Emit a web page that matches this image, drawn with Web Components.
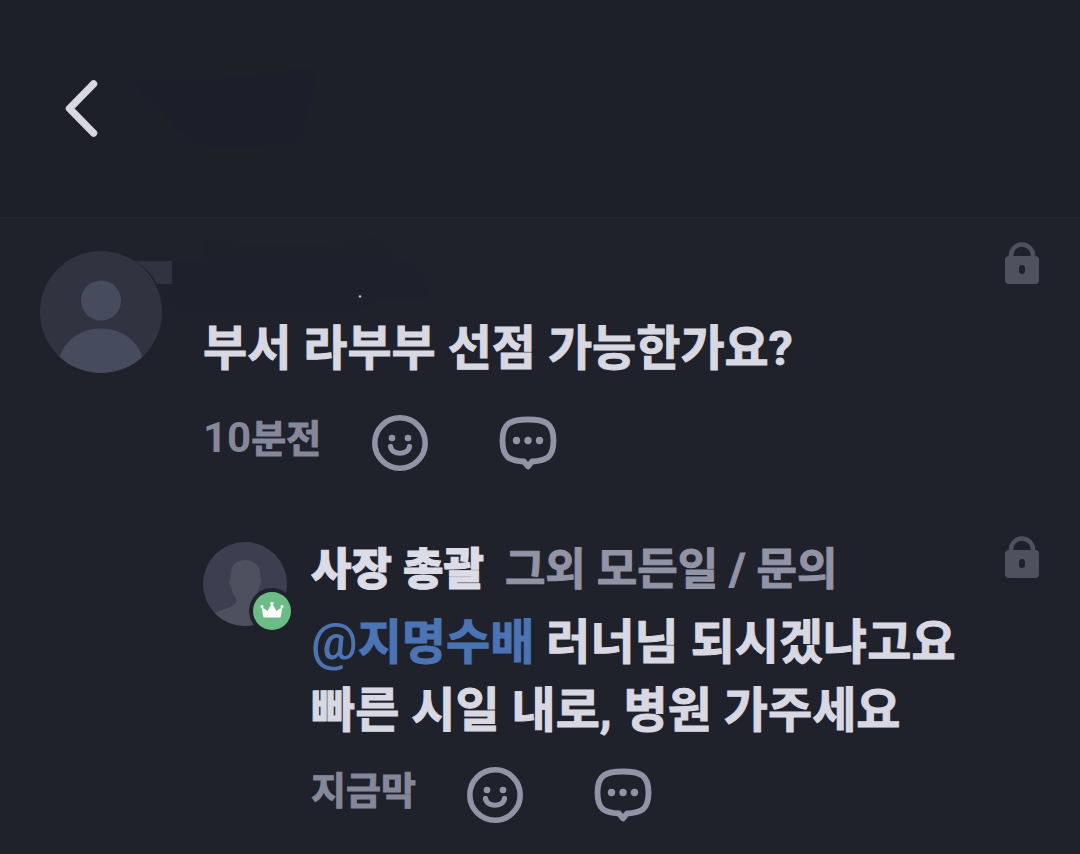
<!DOCTYPE html>
<html lang="ko">
<head>
<meta charset="utf-8">
<meta name="viewport" content="width=device-width, initial-scale=1">
<title>댓글</title>
<style>
  html { background: #20222b; }
  body {
    margin: 0;
    color: #d8d8e3;
    font-family: Roboto, "Noto Sans CJK KR", sans-serif;
    font-weight: 700;
  }
</style>
</head>
<body>
<comment-page></comment-page>

<template id="page-template">
  <style>
    :host { display: block; min-height: 100vh; background: #20222b; }
    main { display: block; }
    .name { color: #dcdce6; font-weight: 900; -webkit-text-stroke: 1px; }
  </style>
  <top-bar></top-bar>
  <main>
    <comment-item time="10분전">
      <user-avatar slot="avatar"></user-avatar>
      <name-cover slot="author"></name-cover>
      부서 라부부 선점 가능한가요?
    </comment-item>
    <comment-item reply time="지금막">
      <user-avatar slot="avatar" kind="owner"></user-avatar>
      <span slot="author" class="name">사장 총괄</span>
      <span slot="role">그외 모든일 / 문의</span>
      <user-mention name="지명수배"></user-mention> 러너님 되시겠냐고요<br>빠른 시일 내로, 병원 가주세요
    </comment-item>
  </main>
</template>

<template id="bar-template">
  <style>
    :host { display: block; background: #1e2028; border-bottom: 1px solid #24262f; }
    header { display: flex; align-items: center; gap: 32px; height: 217px; padding: 0 64px; box-sizing: border-box; }
    button { display: block; padding: 0; border: 0; background: none; color: #d8d8e3; cursor: pointer; }
    svg { display: block; }
  </style>
  <header>
    <button type="button" aria-label="뒤로">
      <svg width="36" height="60" viewBox="0 0 36 60" fill="none" stroke="currentColor" stroke-width="7.500" stroke-linecap="round" stroke-linejoin="round"><path d="M29.500 5 5.500 29.500 29.500 54"/></svg>
    </button>
    <svg width="184" height="84" viewBox="0 0 184 84" fill="#1c1f29" aria-hidden="true"><path d="M2 14 28 12 102 11 150 4 180 1 184 12 178 34 172 62 160 75 124 80 92 82 66 76 46 64 30 44 14 30Z"/></svg>
  </header>
</template>

<template id="cover-template">
  <style>
    :host { display: block; width: 292px; height: 72px; }
    svg { display: block; overflow: visible; }
  </style>
  <svg width="292" height="72" viewBox="0 0 292 72" aria-hidden="true">
    <path fill="#1e202a" d="M64 0 82-3 100 1 140 3 190 1 230-4 250-2 255 17H64Z"/>
    <path fill="#1e212c" d="M33 17H255L287 26 292 36 288 58 240 59 218 70 40 70 26 64Z"/>
    <path fill="#323341" d="M0 19H33V42H18Q12 29-4 19Z"/>
    <circle cx="221" cy="54.500" r="1.300" fill="#b5b6be"/>
  </svg>
</template>

<template id="avatar-template">
  <style>
    :host { display: block; position: relative; }
    svg { display: block; width: 100%; }
    .badge { position: absolute; right: -8px; bottom: -8px; width: 46px; }
    .owner, .badge { display: none; }
    :host([kind="owner"]) .person { display: none; }
    :host([kind="owner"]) .owner, :host([kind="owner"]) .badge { display: block; }
  </style>
  <svg class="person" viewBox="0 0 122 122" aria-hidden="true">
    <clipPath id="round"><circle cx="61" cy="61" r="61"/></clipPath>
    <g clip-path="url(#round)"><path fill="#323341" d="M0 0h122v122H0z"/><circle cx="61" cy="49.500" r="20" fill="#474b5e"/><path fill="#474b5e" d="M17 122C17 95 36 77.500 61 77.500S105 95 105 122Z"/></g>
  </svg>
  <svg class="owner" viewBox="0 0 84 84" aria-hidden="true">
    <clipPath id="disc"><circle cx="42" cy="42" r="42"/></clipPath>
    <g clip-path="url(#disc)"><path fill="#3d3e50" d="M0 0h84v84H0z"/><path fill="#4e505f" d="M28 36C26 24 33 18 42 18S59 24 57 36C59 38 58 43 56 45 55 51 52 56 50 59V64L76 76 60 88H20L12 71C24 66 32 65 34 58 31 54 29 50 28 45 26 42 26 38 28 36Z"/></g>
  </svg>
  <svg class="badge" viewBox="0 0 46 46" aria-hidden="true">
    <circle cx="23" cy="23" r="23" fill="#20222b"/><circle cx="23" cy="23" r="19" fill="#6cbd85"/>
    <g fill="#fff"><path d="M14.500 29.500 12.500 19 18.500 23 23 15.500 27.500 23 33.500 19 31.500 29.500Z"/><circle cx="23" cy="15.500" r="1.800"/><circle cx="13" cy="18.500" r="1.600"/><circle cx="33" cy="18.500" r="1.600"/></g>
  </svg>
</template>

<template id="lock-template">
  <style>:host { display: block; } svg { display: block; }</style>
  <svg width="36" height="44" viewBox="0 0 36 44" role="img" aria-label="비밀 댓글">
    <path d="M7 17V13.500A11 11 0 0 1 29 13.500V17" fill="none" stroke="#4f515e" stroke-width="4.500"/>
    <rect x="1" y="14" width="34" height="28" rx="4" fill="#4f515e"/><rect x="15" y="23" width="6" height="9" rx="3" fill="#20222b"/>
  </svg>
</template>

<template id="mention-template">
  <style>:host { display: inline; } a { color: #4b74b5; text-decoration: none; } .at { font-size: 52px; line-height: 48px; font-weight: 500; -webkit-text-stroke: 0; }</style>
  <a href="#profile"><span class="at">@</span><span class="who"></span></a>
</template>

<template id="actions-template">
  <style>
    :host { display: flex; align-items: center; color: #9193a6; }
    time { font-size: 38px; line-height: 48px; margin: 0 51px 8px 0; color: #85879a; white-space: nowrap; -webkit-text-stroke: 1px; }
    .count { font-size: 42px; -webkit-text-stroke: 0; }
    button { display: block; padding: 0; border: 0; background: none; color: inherit; cursor: pointer; }
    button + button { margin-left: 71px; }
    svg { display: block; }
  </style>
  <time><span class="count"></span><span class="unit"></span></time>
  <button type="button" aria-label="공감">
    <svg width="56" height="56" viewBox="0 0 56 56" fill="none" stroke="currentColor"><circle cx="28" cy="28" r="25.200" stroke-width="5.600"/><circle cx="20" cy="23" r="3.300" fill="currentColor" stroke="none"/><circle cx="36" cy="23" r="3.300" fill="currentColor" stroke="none"/><path d="M18.500 31.500C20 40.500 36 40.500 37.500 31.500" stroke-width="5.200" stroke-linecap="round"/></svg>
  </button>
  <button type="button" aria-label="답글">
    <svg width="58" height="56" viewBox="0 0 58 56" fill="none"><path d="M29 4.500C46 4.500 54.500 8 54.500 25.500S47 45.500 33 46.500L29 51.500 25 46.500C11 45.500 3.500 43 3.500 25.500S12 4.500 29 4.500Z" stroke="currentColor" stroke-width="5.800" stroke-linejoin="round"/><g fill="currentColor"><circle cx="17.500" cy="25.500" r="3.700"/><circle cx="29" cy="25.500" r="3.700"/><circle cx="40.500" cy="25.500" r="3.700"/></g></svg>
  </button>
</template>

<template id="comment-template">
  <style>
    :host { display: block; padding: 24px 40px 0; }
    article { display: grid; grid-template-columns: 122px minmax(0, 1fr) 36px; }
    .avatar { padding-top: 9px; }
    .content { padding-left: 41px; }
    .meta { display: flex; gap: 21px; height: 73px; font-size: 44px; line-height: 68px; white-space: nowrap; }
    .role { color: #9193a6; -webkit-text-stroke: 1px; }
    ::slotted(name-cover) { margin-left: -64px; }
    p { margin: 0; font-size: 48px; line-height: 68px; -webkit-text-stroke: 1px; }
    comment-actions { margin-top: 31px; }
    :host([reply]) { padding: 65px 40px 31px 203px; }
    :host([reply]) article { grid-template-columns: 84px minmax(0, 1fr) 36px; }
    :host([reply]) .avatar { padding-top: 6px; }
    :host([reply]) .content { padding-left: 24px; }
    :host([reply]) comment-actions { margin-top: 21px; }
  </style>
  <article>
    <div class="avatar"><slot name="avatar"></slot></div>
    <div class="content">
      <div class="meta"><slot name="author"></slot><span class="role"><slot name="role"></slot></span></div>
      <p><slot></slot></p>
      <comment-actions></comment-actions>
    </div>
    <lock-icon></lock-icon>
  </article>
</template>

<script>
  class TemplateElement extends HTMLElement {
    constructor(id) {
      super();
      this.attachShadow({ mode: "open" }).append(document.getElementById(id).content.cloneNode(true));
    }
  }
  customElements.define("top-bar", class extends TemplateElement { constructor() { super("bar-template"); } });
  customElements.define("name-cover", class extends TemplateElement { constructor() { super("cover-template"); } });
  customElements.define("user-avatar", class extends TemplateElement { constructor() { super("avatar-template"); } });
  customElements.define("lock-icon", class extends TemplateElement { constructor() { super("lock-template"); } });
  customElements.define("user-mention", class extends TemplateElement {
    constructor() { super("mention-template"); }
    connectedCallback() { this.shadowRoot.querySelector(".who").textContent = this.getAttribute("name"); }
  });
  customElements.define("comment-actions", class extends TemplateElement {
    constructor() { super("actions-template"); }
    set time(value) {
      const [, count, unit] = value.match(/^(\d*)(.*)$/);
      this.shadowRoot.querySelector(".count").textContent = count;
      this.shadowRoot.querySelector(".unit").textContent = unit;
    }
  });
  customElements.define("comment-item", class extends TemplateElement {
    constructor() { super("comment-template"); }
    connectedCallback() {
      const actions = this.shadowRoot.querySelector("comment-actions");
      customElements.upgrade(actions);
      actions.time = this.getAttribute("time");
    }
  });
  customElements.define("comment-page", class extends TemplateElement { constructor() { super("page-template"); } });
</script>
</body>
</html>
